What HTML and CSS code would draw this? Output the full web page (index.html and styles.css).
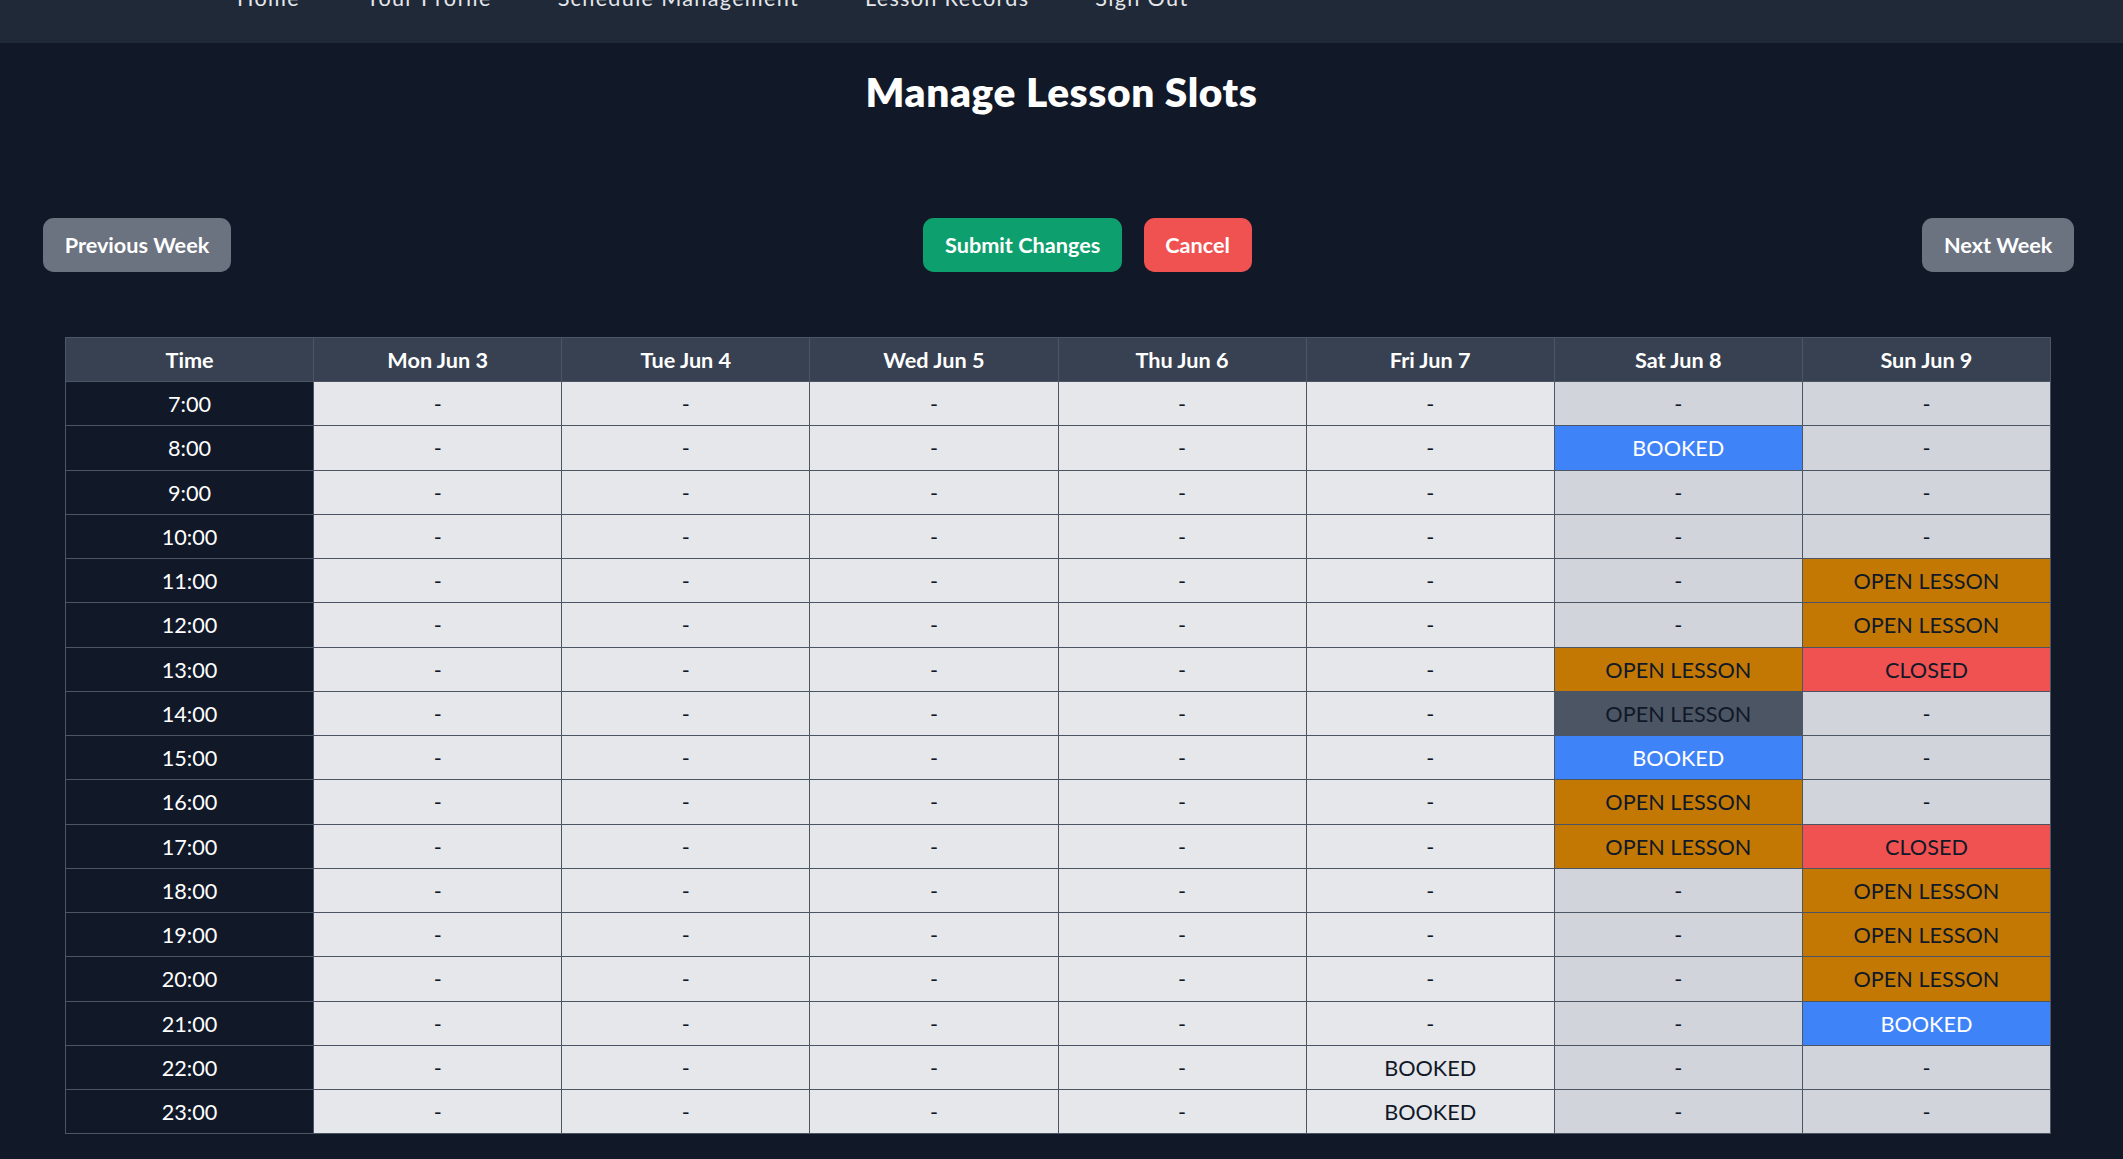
FILE: index.html
```html
<!DOCTYPE html>
<html lang="en">
<head>
<meta charset="utf-8">
<title>Manage Lesson Slots</title>
<link rel="stylesheet" href="styles.css">
</head>
<body>
<nav class="nav">
  <ul class="nav-links">
    <li><a href="#">Home</a></li>
    <li><a href="#">Your Profile</a></li>
    <li><a href="#">Schedule Management</a></li>
    <li><a href="#">Lesson Records</a></li>
    <li><a href="#">Sign Out</a></li>
  </ul>
</nav>
<main class="page">
  <h1 class="title">Manage Lesson Slots</h1>
  <div class="actions">
    <button class="btn btn-gray">Previous Week</button>
    <div class="action-group">
      <button class="btn btn-green">Submit Changes</button>
      <button class="btn btn-red">Cancel</button>
    </div>
    <button class="btn btn-gray">Next Week</button>
  </div>
  <div class="table-wrap">
    <table class="slots">
      <thead>
        <tr><th>Time</th><th>Mon Jun 3</th><th>Tue Jun 4</th><th>Wed Jun 5</th><th>Thu Jun 6</th><th>Fri Jun 7</th><th>Sat Jun 8</th><th>Sun Jun 9</th></tr>
      </thead>
      <tbody>
        <tr><td class="time">7:00</td><td>-</td><td>-</td><td>-</td><td>-</td><td>-</td><td class="we">-</td><td class="we">-</td></tr>
        <tr><td class="time">8:00</td><td>-</td><td>-</td><td>-</td><td>-</td><td>-</td><td class="booked">BOOKED</td><td class="we">-</td></tr>
        <tr><td class="time">9:00</td><td>-</td><td>-</td><td>-</td><td>-</td><td>-</td><td class="we">-</td><td class="we">-</td></tr>
        <tr><td class="time">10:00</td><td>-</td><td>-</td><td>-</td><td>-</td><td>-</td><td class="we">-</td><td class="we">-</td></tr>
        <tr><td class="time">11:00</td><td>-</td><td>-</td><td>-</td><td>-</td><td>-</td><td class="we">-</td><td class="open">OPEN LESSON</td></tr>
        <tr><td class="time">12:00</td><td>-</td><td>-</td><td>-</td><td>-</td><td>-</td><td class="we">-</td><td class="open">OPEN LESSON</td></tr>
        <tr><td class="time">13:00</td><td>-</td><td>-</td><td>-</td><td>-</td><td>-</td><td class="open">OPEN LESSON</td><td class="closed">CLOSED</td></tr>
        <tr><td class="time">14:00</td><td>-</td><td>-</td><td>-</td><td>-</td><td>-</td><td class="selected">OPEN LESSON</td><td class="we">-</td></tr>
        <tr><td class="time">15:00</td><td>-</td><td>-</td><td>-</td><td>-</td><td>-</td><td class="booked">BOOKED</td><td class="we">-</td></tr>
        <tr><td class="time">16:00</td><td>-</td><td>-</td><td>-</td><td>-</td><td>-</td><td class="open">OPEN LESSON</td><td class="we">-</td></tr>
        <tr><td class="time">17:00</td><td>-</td><td>-</td><td>-</td><td>-</td><td>-</td><td class="open">OPEN LESSON</td><td class="closed">CLOSED</td></tr>
        <tr><td class="time">18:00</td><td>-</td><td>-</td><td>-</td><td>-</td><td>-</td><td class="we">-</td><td class="open">OPEN LESSON</td></tr>
        <tr><td class="time">19:00</td><td>-</td><td>-</td><td>-</td><td>-</td><td>-</td><td class="we">-</td><td class="open">OPEN LESSON</td></tr>
        <tr><td class="time">20:00</td><td>-</td><td>-</td><td>-</td><td>-</td><td>-</td><td class="we">-</td><td class="open">OPEN LESSON</td></tr>
        <tr><td class="time">21:00</td><td>-</td><td>-</td><td>-</td><td>-</td><td>-</td><td class="we">-</td><td class="booked">BOOKED</td></tr>
        <tr><td class="time">22:00</td><td>-</td><td>-</td><td>-</td><td>-</td><td>BOOKED</td><td class="we">-</td><td class="we">-</td></tr>
        <tr><td class="time">23:00</td><td>-</td><td>-</td><td>-</td><td>-</td><td>BOOKED</td><td class="we">-</td><td class="we">-</td></tr>
      </tbody>
    </table>
  </div>
</main>
</body>
</html>
```

FILE: styles.css
```css
* { box-sizing: border-box; }

html, body {
  margin: 0;
  padding: 0;
  background: #111827;
  font-family: Lato, "Open Sans", "Liberation Sans", sans-serif;
  font-size: 21.66px;
  line-height: 32.5px;
  color: #ffffff;
  overflow: hidden;
}

.nav {
  height: 43px;
  background: #1f2937;
  overflow: hidden;
}

.nav-links {
  list-style: none;
  margin: -18px 0 0 0;
  padding: 0 0 0 237px;
  display: flex;
  gap: 66px;
}

.nav-links a {
  color: #e5e7eb;
  text-decoration: none;
  font-size: 21.66px;
  letter-spacing: 1.3px;
}

.page {
  padding: 0;
}

.title {
  margin: 25px 0 0 0;
  text-align: center;
  font-size: 40.6px;
  line-height: 48.7px;
  font-weight: 800;
  letter-spacing: 0.6px;
  color: #ffffff;
}

.actions {
  margin-top: 101px;
  padding: 0 49px 0 43px;
  display: flex;
  justify-content: space-between;
  align-items: center;
}

.action-group {
  display: flex;
}

.action-group .btn {
  margin-left: 21.66px;
}

.btn {
  border: none;
  font-family: inherit;
  font-size: 21.66px;
  line-height: 32.5px;
  font-weight: 700;
  color: #ffffff;
  padding: 10.8px 21.66px;
  border-radius: 10.8px;
  cursor: pointer;
}

.btn-gray { background: #6b7280; }
.btn-green { background: #0e9f6e; }
.btn-red { background: #f05252; }

.table-wrap {
  margin-top: 65px;
  padding: 0 72px 0 65px;
}

.slots {
  width: 100%;
  table-layout: fixed;
  border-collapse: collapse;
  text-align: center;
}

.slots th,
.slots td {
  border: 1px solid #4b5563;
  padding: 5.8px 0 4.2px 0;
  height: 44.25px;
  font-size: 21.66px;
  line-height: 32.5px;
}

.slots th {
  background: #374151;
  color: #ffffff;
  font-weight: 700;
}

.slots td {
  background: #e5e7eb;
  color: #111827;
}

.slots td.time {
  background: #111827;
  color: #ffffff;
}

.slots td.we { background: #d1d5db; }
.slots td.booked { background: #3f83f8; color: #ffffff; }
.slots td.open { background: #c27803; color: #111827; }
.slots td.closed { background: #f05252; color: #111827; }
.slots td.selected { background: #4b5563; color: #111827; }
```
